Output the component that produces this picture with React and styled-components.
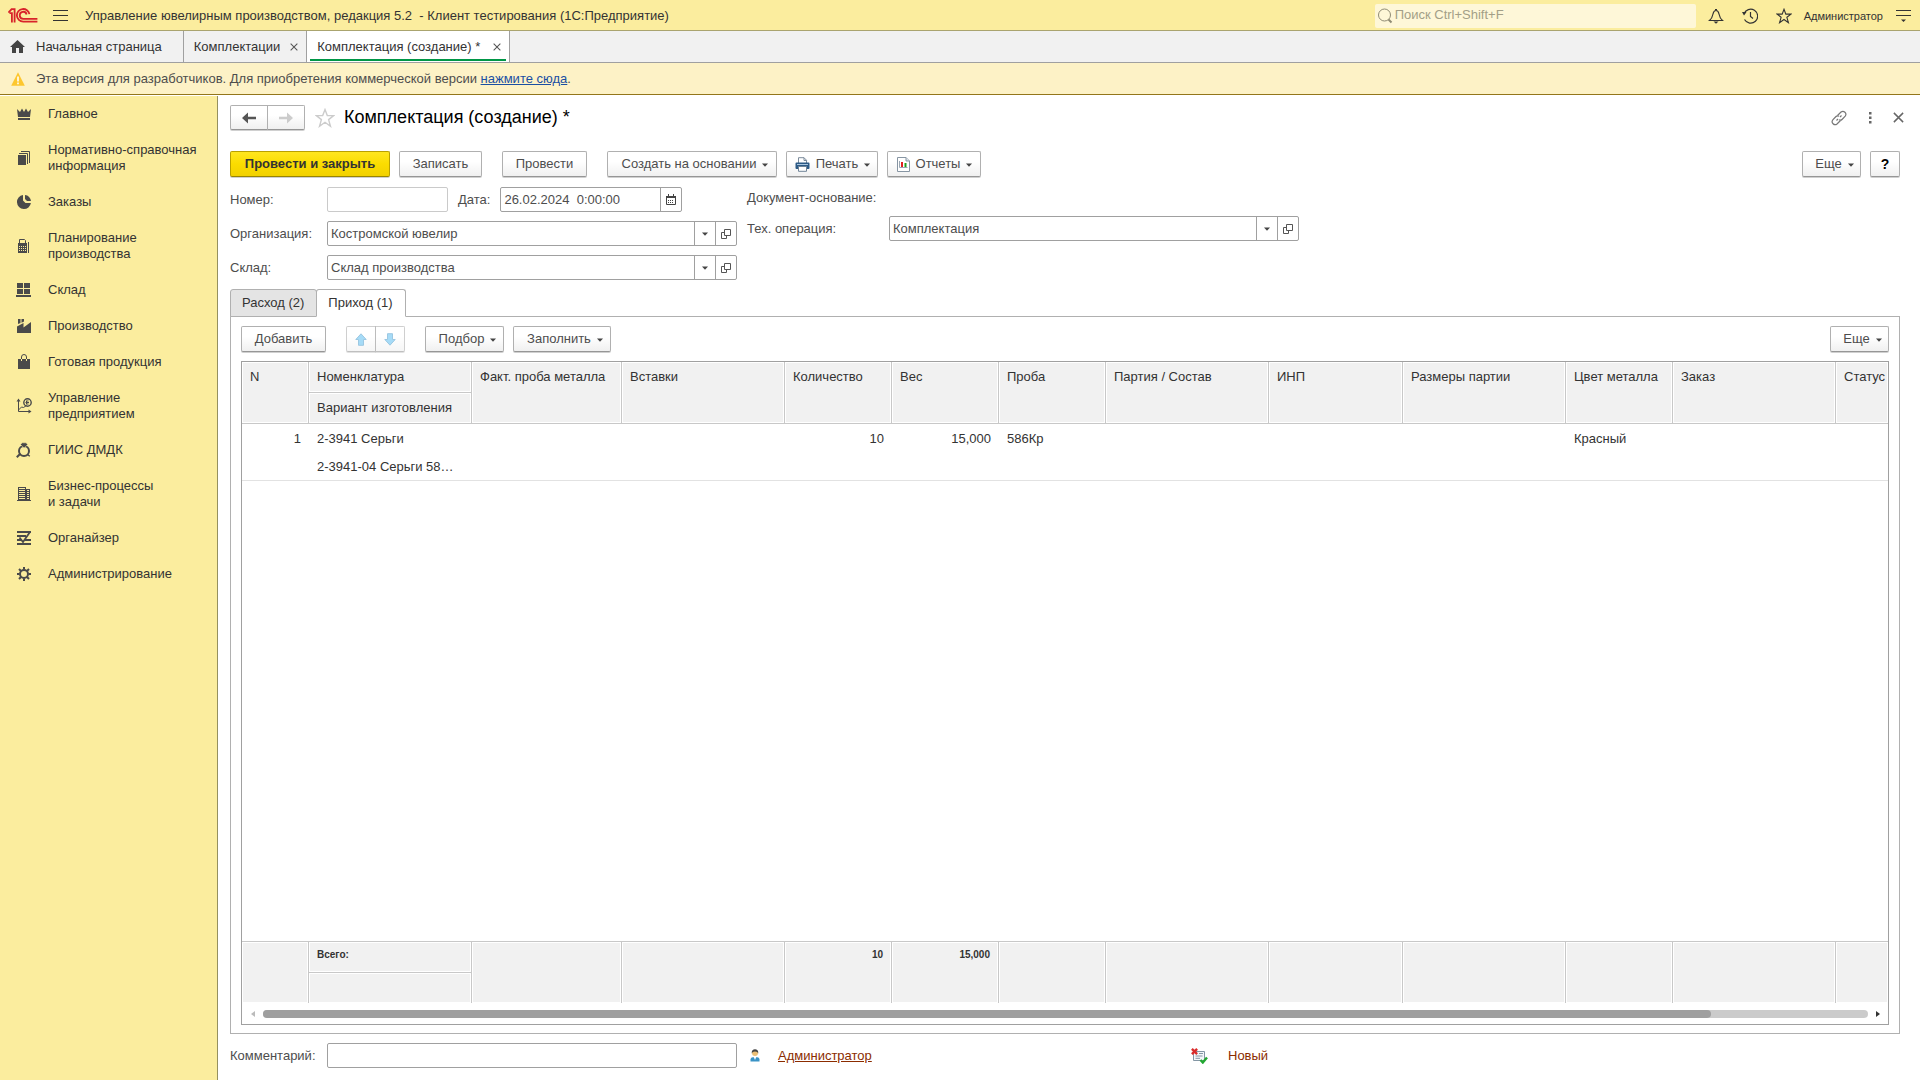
import React from 'react';
import styled, { createGlobalStyle } from 'styled-components';

const GlobalStyle = createGlobalStyle`
  *, *::before, *::after {
    box-sizing: border-box;
  }
  body {
    margin: 0;
    background: #fff;
    color: #333;
    font-family: "Liberation Sans", Arial, sans-serif;
    font-size: 13px;
    line-height: 16px;
  }
  button, input, select {
    margin: 0;
    font: inherit;
    color: inherit;
  }
  svg {
    display: block;
    flex: none;
  }
`;

const Page = styled.div`
  display: flex;
  flex-direction: column;
  height: 100vh;
`;

const TopBar = styled.header`
  display: flex;
  align-items: center;
  height: 31px;
  padding: 1px 9px 0 8px;
  background: #fbed9e;
  border-bottom: 1px solid #aaa46f;
`;

const AppTitle = styled.span`
  flex: 1;
  margin-left: 17px;
  white-space: pre;
`;

const PlainButton = styled.button`
  display: flex;
  align-items: center;
  justify-content: center;
  padding: 0;
  border: 0;
  background: none;
`;

const MenuButton = styled(PlainButton)`
  margin-left: 15px;
`;

const FavoriteButton = styled(PlainButton)`
  margin-left: 10px;
`;

const SearchBox = styled.label`
  display: flex;
  align-items: center;
  gap: 2px;
  width: 321px;
  height: 24px;
  margin-right: 12px;
  padding-left: 2px;
  background: #fef7d8;
  border-radius: 2px;
`;

const SearchInput = styled.input`
  flex: 1;
  min-width: 0;
  padding: 0 0 2px;
  border: 0;
  background: none;
  outline: none;
  &::placeholder {
    color: #a39f87;
    opacity: 1;
  }
`;

const TopIcons = styled.div`
  display: flex;
  align-items: center;
  gap: 18px;
`;

const UserName = styled.a`
  margin: 0 13px 0 12px;
  font-size: 11px;
  color: #333;
  text-decoration: none;
`;

const WindowTabs = styled.nav`
  display: flex;
  height: 32px;
  background: #f1f1f1;
  border-bottom: 1px solid #a0a0a0;
`;

const WindowTab = styled.div`
  display: flex;
  align-items: center;
  gap: 10px;
  padding: 0 8px 0 10px;
  border-right: 1px solid #a0a0a0;
`;

const HomeTab = styled(WindowTab)`
  padding-right: 21px;
`;

const ActiveTab = styled(WindowTab)`
  padding: 0 3px;
  background: #fff;
`;

const ActiveTabInner = styled.div`
  display: flex;
  align-items: center;
  gap: 13px;
  height: 29px;
  padding: 2px 5px 0 7px;
  border-bottom: 2px solid #009646;
`;

const TabLink = styled.a`
  display: flex;
  align-items: center;
  gap: 11px;
  color: #333;
  text-decoration: none;
`;

const Banner = styled.div`
  display: flex;
  align-items: center;
  gap: 11px;
  height: 32px;
  padding-left: 11px;
  background: #fdf2c6;
  border-bottom: 1px solid #93761a;
  color: #4d4d4d;
  a {
    color: #1a4fa3;
  }
`;

const Workspace = styled.div`
  display: flex;
  flex: 1;
  min-height: 0;
  padding-top: 1px;
`;

const Sidebar = styled.nav`
  width: 218px;
  background: #fbed9e;
  border-right: 1px solid #95905f;
`;

const SidebarItem = styled.a`
  display: flex;
  align-items: center;
  gap: 16px;
  padding: 10px 8px 10px 16px;
  color: #333;
  text-decoration: none;
  white-space: pre-line;
  svg {
    color: #4a4a4a;
  }
`;

const Main = styled.main`
  display: flex;
  flex-direction: column;
  flex: 1;
  min-width: 0;
  padding: 9px 20px 12px 12px;
  color: #4d4d4d;
`;

const TitleRow = styled.div`
  display: flex;
  align-items: center;
  height: 25px;
  margin-right: -4px;
`;

const Title = styled.h1`
  flex: 1;
  margin: 0 0 0 9px;
  padding-bottom: 2px;
  font-size: 18px;
  line-height: 22px;
  font-weight: normal;
  color: #000;
`;

const TitleIcons = styled.div`
  display: flex;
  align-items: center;
  gap: 18px;
`;

const ButtonGroup = styled.div`
  display: flex;
`;

const Button = styled.button`
  display: flex;
  align-items: center;
  justify-content: center;
  gap: 6px;
  min-width: ${props => props.$width || 0}px;
  height: 26px;
  padding: ${props => (props.$menu ? '0 6px 0 12px' : '0 12px')};
  border: 1px solid #b0b0b0;
  border-bottom-color: #969696;
  border-radius: 2px;
  background: linear-gradient(#fff 40%, #f0f0f0);
  box-shadow: 0 1px 0 #d0d0d0;
  color: #4d4d4d;
  white-space: nowrap;
`;

const PrimaryButton = styled(Button)`
  border-color: #b9a000;
  border-bottom-color: #998500;
  background: linear-gradient(#ffe61f, #fbdc00 50%, #f2d100);
  color: #333;
  font-weight: bold;
`;

const IconButton = styled(Button)`
  padding: 0 6px 0 7px;
`;

const PairButton = styled(Button)`
  height: ${props => props.$height}px;
  padding: 0;
  opacity: ${props => (props.$faded ? 0.6 : 1)};
  border-radius: 2px 0 0 2px;
  & + & {
    margin-left: -1px;
    border-radius: 0 2px 2px 0;
  }
`;

const HelpButton = styled(Button)`
  padding: 0;
  color: #000;
  font-size: 14px;
  font-weight: bold;
`;

const CommandBar = styled.div`
  display: flex;
  gap: 20px;
  margin-top: ${props => props.$top}px;
`;

const Commands = styled.div`
  display: flex;
  gap: 9px;
`;

const PushRight = styled(Commands)`
  margin-left: auto;
`;

const FormArea = styled.div`
  display: flex;
  gap: 10px;
  margin-top: 10px;
`;

const FormColumn = styled.div`
  display: flex;
  flex-direction: column;
  gap: 9px;
`;

const FormRow = styled.div`
  display: flex;
  align-items: center;
  height: 25px;
`;

const FormText = styled.div`
  height: 20px;
  padding-top: 3px;
`;

const Label = styled.label`
  width: ${props => props.$width}px;
  white-space: nowrap;
`;

const DateLabel = styled.label`
  margin: 0 10px;
`;

const Field = styled.div`
  display: flex;
  width: ${props => props.$width}px;
  height: 25px;
  border: 1px solid ${props => (props.$light ? '#cacaca' : '#a0a0a0')};
  border-radius: 2px;
  background: #fff;
`;

const FieldInput = styled.input`
  flex: 1;
  min-width: 0;
  padding: 0 3px;
  border: 0;
  background: none;
  outline: none;
`;

const SelectBox = styled.div`
  display: grid;
  flex: 1;
`;

const FieldSelect = styled.select`
  grid-area: 1 / 1;
  padding: 0 24px 0 3px;
  border: 0;
  background: none;
  outline: none;
  appearance: none;
`;

const CaretBox = styled.span`
  grid-area: 1 / 1;
  justify-self: end;
  display: flex;
  align-items: center;
  justify-content: center;
  width: 21px;
  border-left: 1px solid #a0a0a0;
  pointer-events: none;
`;

const FieldButton = styled(PlainButton)`
  width: 21px;
  border-left: 1px solid #a0a0a0;
`;

const PageTabs = styled.div`
  display: flex;
  margin: 9px 0 -1px;
`;

const PageTab = styled.button`
  height: 28px;
  padding: 0 12px 0 11px;
  border: 1px solid #b0b0b0;
  border-radius: 3px 3px 0 0;
  border-bottom-color: ${props => (props.$active ? '#fff' : '#b0b0b0')};
  background: ${props => (props.$active ? '#fff' : '#e4e4e4')};
  color: #333;
  z-index: 1;
  & + & {
    margin-left: -1px;
  }
`;

const Panel = styled.section`
  display: flex;
  flex-direction: column;
  flex: 1;
  min-height: 0;
  padding: 0 10px 8px;
  border: 1px solid #b0b0b0;
`;

const TableFrame = styled.div`
  display: flex;
  flex-direction: column;
  flex: 1;
  min-height: 0;
  margin-top: 9px;
  border: 1px solid #a0a0a0;
`;

const TableArea = styled.div`
  flex: 1;
  min-height: 0;
  overflow: hidden;
`;

const Table = styled.table`
  width: 100%;
  min-width: 1646px;
  height: 100%;
  table-layout: fixed;
  border-collapse: separate;
  border-spacing: 0;
  color: #333;
`;

const HeadCell = styled.th`
  height: 31px;
  padding: 7px 8px 0;
  border-right: 1px solid #c8c8c8;
  border-bottom: 1px solid #c8c8c8;
  background: #f1f1f1;
  box-shadow: inset 0 0 0 1px #fff;
  text-align: ${props => (props.$right ? 'right' : 'left')};
  vertical-align: top;
  font-weight: normal;
  white-space: nowrap;
  &:last-child {
    border-right: ${props => (props.$inner ? '1px solid #c8c8c8' : '0')};
  }
`;

const TotalCell = styled(HeadCell).attrs({ as: 'td' })`
  padding-top: 5px;
  border-top: 1px solid #c8c8c8;
  border-bottom: 0;
  font-size: 10px;
  font-weight: bold;
`;

const Cell = styled.td`
  height: 29px;
  padding: 0 8px;
  text-align: ${props => (props.$right ? 'right' : 'left')};
  white-space: nowrap;
`;

const SubCell = styled.td`
  height: 28px;
  padding: 0 14px 0 8px;
  border-bottom: 1px solid #e2e2e2;
  overflow: hidden;
  text-overflow: ellipsis;
  white-space: nowrap;
`;

const FillerCell = styled.td`
  padding: 0;
`;

const ScrollRow = styled.div`
  display: flex;
  align-items: center;
  gap: 8px;
  height: 21px;
  padding: 0 8px 0 9px;
`;

const ScrollTrack = styled.div`
  flex: 1;
  height: 8px;
  border-radius: 4px;
  background: #cbcbcb;
`;

const ScrollThumb = styled.div`
  height: 8px;
  border-radius: 4px;
  background: #9f9f9f;
`;

const FooterRow = styled.div`
  display: flex;
  align-items: center;
  height: 25px;
  margin-top: 9px;
`;

const UserCell = styled.div`
  display: flex;
  align-items: center;
  gap: 18px;
  width: 441px;
  margin-left: 13px;
`;

const UserLink = styled.a`
  color: #8b2c00;
`;

const Status = styled.span`
  display: flex;
  align-items: center;
  gap: 20px;
  color: #8b2c00;
`;

const CaretShift = styled.span`
  padding-top: 2px;
`;

/* ---------- icons ---------- */

const Icon = ({ size = 16, children }) => (
  <svg width={size} height={size} viewBox={`0 0 ${size} ${size}`} fill="currentColor" aria-hidden="true">
    {children}
  </svg>
);

const Logo = () => (
  <svg width="30" height="15" viewBox="0 0 30 15" fill="none" stroke="#d8232a" strokeWidth="1.8" aria-label="1C">
    <path d="M0.5 4.6L3.6 1.2H6.6V14.5" />
    <path d="M1.5 5.2H3.9V14.5" />
    <path d="M21.4 6.2A6.3 6.3 0 1 0 15.2 13.6H29.4" />
    <path d="M18.6 6.4A3.5 3.5 0 1 0 15.2 10.8H29.4" />
  </svg>
);

const Caret = () => (
  <svg width="6" height="4" viewBox="0 0 6 4" fill="#444" aria-hidden="true">
    <path d="M0 0.5h6L3 3.8z" />
  </svg>
);

const Cross = ({ size = 8, color = '#555' }) => (
  <svg width={size} height={size} viewBox="0 0 10 10" stroke={color} strokeWidth="1.3" aria-hidden="true">
    <path d="M0.8 0.8l8.4 8.4M9.2 0.8L0.8 9.2" />
  </svg>
);

const Arrow = ({ color, back }) => (
  <svg width="14" height="12" viewBox="0 0 14 12" fill={color} aria-hidden="true">
    {back
      ? <path d="M0 6l6-5.5V4.8h8v2.4H6v4.3z" />
      : <path d="M14 6L8 0.5V4.8H0v2.4h8v4.3z" />}
  </svg>
);

const MoveArrow = ({ up }) => (
  <svg width="12" height="13" viewBox="0 0 12 13" fill="#6cc4f2" stroke="#5ba4d0" aria-hidden="true">
    {up
      ? <path d="M6 0.8l5.2 5.7H8.5v5.8h-5V6.500H0.8z" />
      : <path d="M6 12.2l5.2-5.7H8.5V0.7h-5v5.8H0.8z" />}
  </svg>
);

const Star = ({ size, color }) => (
  <svg width={size} height={size} viewBox="0 0 20 20" fill="none" stroke={color} strokeWidth="1.4" aria-hidden="true">
    <path d="M10 1.6l2.3 6h6.4l-5.1 4 1.9 6.7L10 14.3l-5.5 4 1.9-6.7-5.1-4h6.4z" />
  </svg>
);

const OpenIcon = () => (
  <svg width="10" height="10" viewBox="0 0 10 10" fill="none" stroke="#555" aria-hidden="true">
    <path d="M3.5 0.5h6v6h-6zM3.5 3.5h-3v6h5v-3" />
  </svg>
);

const CalendarIcon = () => (
  <svg width="10" height="11" viewBox="0 0 10 11" fill="none" stroke="#444" aria-hidden="true">
    <path d="M0.5 2.5h9v8h-9z" />
    <path d="M0 2.5h10M0.5 3.5h9M2.5 0v2M7.5 0v2" />
    <path d="M2 6.5h6M2 8.5h6" strokeDasharray="1 1" />
  </svg>
);

const PrinterIcon = () => (
  <svg width="15" height="15" viewBox="0 0 15 15" aria-hidden="true">
    <path d="M3.5 6V0.7h5.5l2.5 2.5V6" fill="#fff" stroke="#7b8b9b" />
    <path d="M9 0.7v2.8h2.5" fill="none" stroke="#7b8b9b" />
    <path d="M0.5 6.5a1 1 0 0 1 1-1h12a1 1 0 0 1 1 1V11a1 1 0 0 1-1 1h-12a1 1 0 0 1-1-1z" fill="#2c5a86" />
    <path d="M2 7.5h11" stroke="#a9c6df" />
    <path d="M3.5 9.5h8v4.8h-8z" fill="#fff" stroke="#6f8396" />
  </svg>
);

const ReportIcon = () => (
  <svg width="13" height="15" viewBox="0 0 13 15" aria-hidden="true">
    <path d="M0.5 0.5H9l3.5 3.5v10.5h-12z" fill="#fff" stroke="#8795a3" />
    <path d="M9 0.5V4h3.5" fill="#dde3e9" stroke="#8795a3" />
    <path d="M2.5 4v6.5h8" fill="none" stroke="#9aa7b3" />
    <path d="M4 5h2v5H4z" fill="#e02020" />
    <path d="M7.5 6h2v4h-2z" fill="#1fa01f" />
  </svg>
);

const PersonIcon = () => (
  <svg width="10" height="13" viewBox="0 0 10 13" aria-hidden="true">
    <path d="M0.5 12.5V10.6C0.5 8.8 2 8 5 8s4.5 0.8 4.5 2.6v1.9z" fill="#3a93c6" />
    <path d="M3.7 8h2.6L5 11z" fill="#fff" />
    <circle cx="5" cy="4" r="3" fill="#ecbf75" />
    <path d="M1.7 4.5C1.5 1.5 3 0.3 5 0.3s3.5 1.2 3.3 4.2C7.6 3 7 2.5 5 2.4 3 2.5 2.4 3 1.7 4.5z" fill="#444" />
  </svg>
);

const StatusIcon = () => (
  <svg width="17" height="16" viewBox="0 0 17 16" fill="none" aria-hidden="true">
    <path d="M2.5 3.5v9h11v-9z" fill="#f3f6f9" stroke="#8496a5" />
    <path d="M8 5.5h4M4.5 8h7M4.5 10.3h4.5" stroke="#8496a5" />
    <path d="M0.9 0.9l5.2 5.2M6.1 0.9L0.9 6.1" stroke="#d92b2b" strokeWidth="2.4" />
    <path d="M9.5 12l2.3 2.5L16 9.5" stroke="#22a832" strokeWidth="2.4" />
  </svg>
);

const icons = {
  crown: (
    <Icon>
      <path d="M1 3l3 3L6 2.5l2 3.5 2-3.5L12 6l3-3-1 8H2z" />
      <path d="M2 12h12v2H2z" />
    </Icon>
  ),
  copies: (
    <Icon>
      <path d="M2 5h8v10H2z" />
      <path d="M3 3.5h8.5V14M5 1.5h8.5V13" fill="none" stroke="currentColor" />
    </Icon>
  ),
  pie: (
    <Icon>
      <path d="M7 1.1A7 7 0 1 0 14.9 9H9.500L7 6.500z" />
      <path d="M9 1a6.500 6.500 0 0 1 6 6h-4L9 5z" />
    </Icon>
  ),
  calc: (
    <Icon>
      <path d="M3.5 5V1.5h5l1 1V5" fill="none" stroke="currentColor" />
      <path d="M2 5h9v10H2z" />
      <path d="M12 4h1v11h-1z" />
      <path d="M3 8.5h7M3 10.5h7M3 12.5h7" stroke="#fbed9e" strokeDasharray="1 1" />
    </Icon>
  ),
  warehouse: (
    <Icon>
      <path d="M1 1h6v5H1zM8 1h6v5H8zM1 7h6v5H1zM8 7h6v5H8zM0 13h15v2H0z" />
    </Icon>
  ),
  factory: (
    <Icon>
      <path d="M2 1h2.500v4L2 6zM5.500 1H8v2.500L5.500 4.800z" />
      <path d="M1 15V8.500L7.500 5v4.500L15 4v11z" />
    </Icon>
  ),
  bag: (
    <Icon>
      <path d="M2 5h12v10H2z" />
      <path d="M5.500 6V3a2.500 2.500 0 0 1 5 0v3" fill="none" stroke="currentColor" />
      <path d="M5.500 5v2M10.500 5v2" stroke="#fbed9e" />
    </Icon>
  ),
  axes: (
    <Icon>
      <path d="M2.5 2v11.5H14" fill="none" stroke="currentColor" />
      <path d="M0.5 3.5L2.5 0.5l2 3zM12.5 11.5l3 2-3 2z" />
      <path d="M2.500 12l3-3 2 0.500 3-2" fill="none" stroke="currentColor" />
      <circle cx="11.500" cy="4.500" r="3.700" fill="none" stroke="currentColor" strokeWidth="1.400" />
      <path d="M10.500 2.500v4M9.500 4.500h3.500M11 3h1.500M11 6h1.500" stroke="currentColor" />
    </Icon>
  ),
  ring: (
    <Icon>
      <circle cx="8" cy="9" r="5" fill="none" stroke="currentColor" strokeWidth="2" />
      <path d="M4.500 2.500L6.200 0.800h3.800l1.700 1.700L8.100 6z" stroke="#fbed9e" strokeWidth="0.500" />
      <path d="M4.500 11.500L0.800 15.200" stroke="currentColor" strokeWidth="2" />
      <path d="M11.500 12.500l2.300 1.700" stroke="currentColor" strokeWidth="1.400" />
    </Icon>
  ),
  building: (
    <Icon>
      <path d="M1 14h14v1H1zM2 1h8v13H2zM10 3h4v11h-4z" />
      <path d="M3 2.5h6M3 4.500h6M3 6.500h6M3 8.500h6M3 10.500h6M3 12.500h6" stroke="#fbed9e" />
      <path d="M11 4.500h2M11 6.500h2M11 8.500h2M11 10.500h2M11 12.500h2" stroke="#fbed9e" />
    </Icon>
  ),
  organizer: (
    <Icon>
      <path d="M1 1h14v2H1zM1 5h9v2H1zM1 9h4v2H1zM9 9h6v2H9zM1 13h14v2H1z" />
      <path d="M3.500 7.500L7 12l7-10" fill="none" stroke="currentColor" strokeWidth="1.800" />
    </Icon>
  ),
  gear: (
    <Icon>
      <circle cx="8" cy="8" r="4" fill="none" stroke="currentColor" strokeWidth="2" />
      <path
        d="M8 1v2.500M8 12.500V15M1 8h2.500M12.500 8H15M3 3l2 2M11 11l2 2M13 3l-2 2M5 11l-2 2"
        stroke="currentColor"
        strokeWidth="2"
      />
    </Icon>
  ),
};

/* ---------- data ---------- */

const sections = [
  { text: 'Главное', icon: 'crown' },
  { text: 'Нормативно-справочная\nинформация', icon: 'copies' },
  { text: 'Заказы', icon: 'pie' },
  { text: 'Планирование\nпроизводства', icon: 'calc' },
  { text: 'Склад', icon: 'warehouse' },
  { text: 'Производство', icon: 'factory' },
  { text: 'Готовая продукция', icon: 'bag' },
  { text: 'Управление\nпредприятием', icon: 'axes' },
  { text: 'ГИИС ДМДК', icon: 'ring' },
  { text: 'Бизнес-процессы\nи задачи', icon: 'building' },
  { text: 'Органайзер', icon: 'organizer' },
  { text: 'Администрирование', icon: 'gear' },
];

const columns = [
  { title: 'N', width: 67, value: '1', right: true },
  { title: 'Номенклатура', sub: 'Вариант изготовления', width: 163, value: '2-3941 Серьги', total: 'Всего:' },
  { title: 'Факт. проба металла', width: 150 },
  { title: 'Вставки', width: 163 },
  { title: 'Количество', width: 107, value: '10', total: '10', right: true },
  { title: 'Вес', width: 107, value: '15,000', total: '15,000', right: true },
  { title: 'Проба', width: 107, value: '586Кр' },
  { title: 'Партия / Состав', width: 163 },
  { title: 'ИНП', width: 134 },
  { title: 'Размеры партии', width: 163 },
  { title: 'Цвет металла', width: 107, value: 'Красный' },
  { title: 'Заказ', width: 163 },
  { title: 'Статус' },
];

const MenuText = ({ children }) => (
  <>
    {children}
    <CaretShift><Caret /></CaretShift>
  </>
);

const SelectField = ({ id, value, label }) => (
  <Field $width={410}>
    <SelectBox>
      <FieldSelect id={id} defaultValue={value}>
        <option>{value}</option>
      </FieldSelect>
      <CaretBox><Caret /></CaretBox>
    </SelectBox>
    <FieldButton type="button" aria-label={label}><OpenIcon /></FieldButton>
  </Field>
);

const ItemsTable = () => (
  <Table>
    <colgroup>
      {columns.map(c => <col key={c.title} width={c.width} />)}
    </colgroup>
    <thead>
      <tr>
        {columns.map(c => (
          <HeadCell key={c.title} rowSpan={c.sub ? 1 : 2}>{c.title}</HeadCell>
        ))}
      </tr>
      <tr>
        <HeadCell $inner>Вариант изготовления</HeadCell>
      </tr>
    </thead>
    <tbody>
      <tr>
        {columns.map(c => <Cell key={c.title} $right={c.right}>{c.value}</Cell>)}
      </tr>
      <tr>
        {columns.map(c => <SubCell key={c.title}>{c.sub ? '2-3941-04 Серьги 585 Кр' : null}</SubCell>)}
      </tr>
      <tr>
        <FillerCell colSpan={columns.length} />
      </tr>
    </tbody>
    <tfoot>
      <tr>
        {columns.map(c => (
          <TotalCell key={c.title} rowSpan={c.sub ? 1 : 2} $right={c.right}>{c.total}</TotalCell>
        ))}
      </tr>
      <tr>
        <TotalCell $inner />
      </tr>
    </tfoot>
  </Table>
);

const App = () => (
  <Page>
    <GlobalStyle />
    <TopBar>
      <Logo />
      <MenuButton type="button" aria-label="Меню">
        <svg width="15" height="12" viewBox="0 0 15 12" stroke="#333" aria-hidden="true">
          <path d="M0 0.5h15M0 5.5h15M0 10.5h15" />
        </svg>
      </MenuButton>
      <AppTitle>{'Управление ювелирным производством, редакция 5.2  - Клиент тестирования (1С:Предприятие)'}</AppTitle>
      <SearchBox>
        <svg width="16" height="16" viewBox="0 0 16 16" fill="none" stroke="#8f8b74" aria-hidden="true">
          <circle cx="7.5" cy="7" r="6" />
          <path d="M11.5 11.5l3 3" strokeWidth="2" />
        </svg>
        <SearchInput type="text" placeholder="Поиск Ctrl+Shift+F" aria-label="Поиск" />
      </SearchBox>
      <TopIcons>
        <PlainButton type="button" aria-label="Оповещения">
          <svg width="16" height="16" viewBox="0 0 16 16" fill="none" stroke="#333" strokeWidth="1.2" aria-hidden="true">
            <path d="M1.500 12.500C4 10.500 4.500 8.500 5 6c.4-2 1.200-3.500 3-3.500S10.600 4 11 6c.5 2.500 1 4.500 3.500 6.500z" />
            <path d="M7 1.500h2" />
            <path d="M5.500 13.500h5L8 15.800z" fill="#333" stroke="none" />
          </svg>
        </PlainButton>
        <PlainButton type="button" aria-label="История">
          <svg width="16" height="16" viewBox="0 0 16 16" fill="none" stroke="#333" strokeWidth="1.2" aria-hidden="true">
            <path d="M2 6A7 7 0 1 1 2.5 11.5" />
            <path d="M8.5 4v4.5l2.5 2" />
            <path d="M0 4h4.5L2 7.5z" fill="#333" stroke="none" />
          </svg>
        </PlainButton>
        <PlainButton type="button" aria-label="Избранное"><Star size={16} color="#333" /></PlainButton>
      </TopIcons>
      <UserName href="#user">Администратор</UserName>
      <PlainButton type="button" aria-label="Сервис">
        <svg width="15" height="14" viewBox="0 0 15 14" stroke="#333" aria-hidden="true">
          <path d="M0 1.5h15M0 6.5h15" />
          <path d="M5 10.5h5L7.5 13z" fill="#333" stroke="none" />
        </svg>
      </PlainButton>
    </TopBar>

    <WindowTabs>
      <HomeTab>
        <TabLink href="#home">
          <svg width="15" height="13" viewBox="0 0 15 13" fill="#444" aria-hidden="true">
            <path d="M7.5 0L15 7h-2v6H9V8H6v5H2V7H0z" />
          </svg>
          Начальная страница
        </TabLink>
      </HomeTab>
      <WindowTab>
        <TabLink href="#list">Комплектации</TabLink>
        <PlainButton type="button" aria-label="Закрыть"><Cross /></PlainButton>
      </WindowTab>
      <ActiveTab>
        <ActiveTabInner>
          <TabLink href="#new">Комплектация (создание) *</TabLink>
          <PlainButton type="button" aria-label="Закрыть"><Cross /></PlainButton>
        </ActiveTabInner>
      </ActiveTab>
    </WindowTabs>

    <Banner>
      <svg width="14" height="14" viewBox="0 0 14 14" aria-hidden="true">
        <path d="M7 0.3L13.8 13.8H0.2z" fill="#fdc72f" />
        <path d="M7 4.5v5M7 10.5v1.8" stroke="#fff" strokeWidth="1.6" />
      </svg>
      <span>
        Эта версия для разработчиков. Для приобретения коммерческой версии <a href="#buy">нажмите сюда</a>.
      </span>
    </Banner>

    <Workspace>
      <Sidebar>
        {sections.map(s => (
          <SidebarItem key={s.text} href="#section">
            {icons[s.icon]}
            <span>{s.text}</span>
          </SidebarItem>
        ))}
      </Sidebar>

      <Main>
        <TitleRow>
          <ButtonGroup>
            <PairButton type="button" $width={38} $height={25} aria-label="Назад"><Arrow back color="#555" /></PairButton>
            <PairButton type="button" $width={38} $height={25} aria-label="Вперед"><Arrow color="#ccc" /></PairButton>
          </ButtonGroup>
          <FavoriteButton type="button" aria-label="В избранное">
            <Star size={20} color="#ccc" />
          </FavoriteButton>
          <Title>Комплектация (создание) *</Title>
          <TitleIcons>
            <PlainButton type="button" aria-label="Ссылка">
              <svg width="16" height="16" viewBox="0 0 16 16" fill="none" stroke="#777" strokeWidth="1.2" aria-hidden="true">
                <path d="M6.500 5.500L10 2a3 3 0 0 1 4.200 4.200L11 9.500c-.8.8-2 .8-3 .3" />
                <path d="M9.500 10.500L6 14a3 3 0 0 1-4.200-4.200L5 6.500c.8-.8 2-.8 3-.3" />
                <path d="M5.500 10.500l1.500-1.500M9 7l1.500-1.500" />
              </svg>
            </PlainButton>
            <PlainButton type="button" aria-label="Действия">
              <svg width="10" height="12" viewBox="0 0 10 12" fill="#666" aria-hidden="true">
                <path d="M4 0h2.500v2.500H4zM4 4.500h2.500V7H4zM4 9h2.500v2.500H4z" />
              </svg>
            </PlainButton>
            <PlainButton type="button" aria-label="Закрыть"><Cross size={11} color="#666" /></PlainButton>
          </TitleIcons>
        </TitleRow>

        <CommandBar $top={21}>
          <Commands>
            <PrimaryButton type="button" $width={160}>Провести и закрыть</PrimaryButton>
            <Button type="button" $width={83}>Записать</Button>
          </Commands>
          <Button type="button" $width={85}>Провести</Button>
          <Commands>
            <Button type="button" $menu $width={170}><MenuText>Создать на основании</MenuText></Button>
            <IconButton type="button" $width={92}><PrinterIcon /><MenuText>Печать</MenuText></IconButton>
            <IconButton type="button" $width={94}><ReportIcon /><MenuText>Отчеты</MenuText></IconButton>
          </Commands>
          <PushRight>
            <Button type="button" $menu $width={59}><MenuText>Еще</MenuText></Button>
            <HelpButton type="button" $width={30}>?</HelpButton>
          </PushRight>
        </CommandBar>

        <FormArea>
          <FormColumn>
            <FormRow>
              <Label htmlFor="number" $width={97}>Номер:</Label>
              <Field $width={121} $light><FieldInput id="number" type="text" /></Field>
              <DateLabel htmlFor="date">Дата:</DateLabel>
              <Field $width={182}>
                <FieldInput id="date" type="text" defaultValue="26.02.2024  0:00:00" />
                <FieldButton type="button" aria-label="Календарь"><CalendarIcon /></FieldButton>
              </Field>
            </FormRow>
            <FormRow>
              <Label htmlFor="org" $width={97}>Организация:</Label>
              <SelectField id="org" value="Костромской ювелир" label="Открыть организацию" />
            </FormRow>
            <FormRow>
              <Label htmlFor="store" $width={97}>Склад:</Label>
              <SelectField id="store" value="Склад производства" label="Открыть склад" />
            </FormRow>
          </FormColumn>
          <FormColumn>
            <FormText>Документ-основание:</FormText>
            <FormRow>
              <Label htmlFor="operation" $width={142}>Тех. операция:</Label>
              <SelectField id="operation" value="Комплектация" label="Открыть операцию" />
            </FormRow>
          </FormColumn>
        </FormArea>

        <PageTabs>
          <PageTab type="button">Расход (2)</PageTab>
          <PageTab type="button" $active>Приход (1)</PageTab>
        </PageTabs>
        <Panel>
          <CommandBar $top={9}>
            <Button type="button" $width={85}>Добавить</Button>
            <ButtonGroup>
              <PairButton type="button" $width={30} $height={26} $faded aria-label="Вверх"><MoveArrow up /></PairButton>
              <PairButton type="button" $width={30} $height={26} $faded aria-label="Вниз"><MoveArrow /></PairButton>
            </ButtonGroup>
            <Commands>
              <Button type="button" $menu $width={79}><MenuText>Подбор</MenuText></Button>
              <Button type="button" $menu $width={98}><MenuText>Заполнить</MenuText></Button>
            </Commands>
            <PushRight>
              <Button type="button" $menu $width={59}><MenuText>Еще</MenuText></Button>
            </PushRight>
          </CommandBar>
          <TableFrame>
            <TableArea>
              <ItemsTable />
            </TableArea>
            <ScrollRow>
              <svg width="4" height="6" viewBox="0 0 4 6" fill="#bbb" aria-hidden="true"><path d="M4 0v6L0 3z" /></svg>
              <ScrollTrack>
                <ScrollThumb style={{ width: `${(1447 / 1604) * 100}%` }} />
              </ScrollTrack>
              <svg width="4" height="6" viewBox="0 0 4 6" fill="#333" aria-hidden="true"><path d="M0 0v6l4-3z" /></svg>
            </ScrollRow>
          </TableFrame>
        </Panel>

        <FooterRow>
          <Label htmlFor="comment" $width={97}>Комментарий:</Label>
          <Field $width={410}><FieldInput id="comment" type="text" /></Field>
          <UserCell>
            <PersonIcon />
            <UserLink href="#user">Администратор</UserLink>
          </UserCell>
          <Status><StatusIcon />Новый</Status>
        </FooterRow>
      </Main>
    </Workspace>
  </Page>
);

export default App;
